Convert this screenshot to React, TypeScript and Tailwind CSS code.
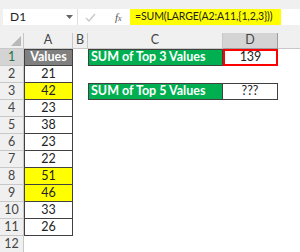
import React from 'react';

const values: { v: string; hi?: boolean }[] = [
  { v: '21' },
  { v: '42', hi: true },
  { v: '23' },
  { v: '38' },
  { v: '23' },
  { v: '22' },
  { v: '51', hi: true },
  { v: '46', hi: true },
  { v: '33' },
  { v: '26' },
];

function RowHead({ n, active }: { n: number; active?: boolean }) {
  return (
    <div
      className={`w-[24px] h-full shrink-0 flex items-center justify-center border-r border-b border-[#c8c8c8] text-[12.5px] ${
        active ? 'bg-[#d4d4d4] text-[#217346]' : 'bg-[#f0f0f0] text-[#444]'
      }`}
    >
      {n}
    </div>
  );
}

export default function App() {
  return (
    <div className="w-[300px] h-[252px] overflow-hidden bg-white text-black" style={{ fontFamily: 'Lato, "Open Sans", sans-serif' }}>
      {/* formula bar */}
      <div className="h-[33px] bg-[#f0f0f0] pt-[9px]">
        <div className="flex h-[16px] ml-[3px] bg-white">
          <div className="w-[75px] flex items-center justify-between pl-[7px] pr-[4px] border-r border-[#e0e0e0]">
            <span className="text-[12px] text-[#222]">D1</span>
            <svg width="7" height="4" viewBox="0 0 7 4">
              <path d="M0 0h7L3.5 4z" fill="#666" />
            </svg>
          </div>
          <div className="w-[52px] flex items-center pl-[7px] gap-[19px]">
            <svg width="11" height="9" viewBox="0 0 11 9">
              <path d="M1 5l3 3 6-7" stroke="#c8c8c8" strokeWidth="1.4" fill="none" />
            </svg>
            <span className="text-[11px] italic text-[#555]" style={{ fontFamily: '"Liberation Serif", serif' }}>
              f<span className="text-[8px]">x</span>
            </span>
          </div>
          <div className="w-[151px] bg-[#ffff00] flex items-center pl-[5px] text-[10.5px] text-[#222] whitespace-nowrap tracking-[-0.1px]">
            =SUM(LARGE(A2:A11,{'{'}1,2,3{'}'}))
          </div>
          <div className="flex-1 bg-white" />
        </div>
      </div>

      {/* column headers */}
      <div className="flex h-[16px] text-[12.5px] text-[#444]">
        <div className="w-[24px] shrink-0 bg-[#f0f0f0] border-r border-b border-[#c8c8c8] relative">
          <svg className="absolute right-[2px] bottom-[2px]" width="10" height="10" viewBox="0 0 10 10">
            <path d="M10 0V10H0z" fill="#b8b8b8" />
          </svg>
        </div>
        <div className="w-[49px] shrink-0 bg-[#f0f0f0] border-r border-b border-[#c8c8c8] flex items-center justify-center">A</div>
        <div className="w-[15px] shrink-0 bg-[#f0f0f0] border-r border-b border-[#c8c8c8] flex items-center justify-center">B</div>
        <div className="w-[135px] shrink-0 bg-[#f0f0f0] border-r border-b border-[#c8c8c8] flex items-center justify-center">C</div>
        <div className="w-[55px] shrink-0 bg-[#d4d4d4] border-r border-b border-[#9e9e9e] flex items-center justify-center">D</div>
        <div className="flex-1 bg-[#f0f0f0] border-b border-[#c8c8c8]" />
      </div>

      {/* row 1 */}
      <div className="flex h-[17px] text-[12.5px]">
        <RowHead n={1} active />
        <div className="w-[49px] shrink-0 bg-[#808080] border border-[#404040] text-white font-bold flex items-center justify-center">
          Values
        </div>
        <div className="w-[15px] shrink-0" />
        <div className="w-[135px] shrink-0 bg-[#00b050] border border-[#404040] text-white font-bold flex items-center pl-[2px]">
          SUM of Top 3 Values
        </div>
        <div className="w-[55px] shrink-0 border-2 border-[#ff0000] flex items-center justify-center text-[#222]">
          139
        </div>
      </div>

      {values.map((row, i) => (
        <div key={i} className="flex h-[17px] text-[12.5px]">
          <RowHead n={i + 2} />
          <div
            className={`w-[49px] shrink-0 border-x border-b border-[#404040] flex items-center justify-center text-[#222] ${
              row.hi ? 'bg-[#ffff00]' : 'bg-white'
            }`}
          >
            {row.v}
          </div>
          {i === 1 && (
            <>
              <div className="w-[15px] shrink-0" />
              <div className="w-[135px] shrink-0 bg-[#00b050] border border-[#404040] text-white font-bold flex items-center pl-[2px]">
                SUM of Top 5 Values
              </div>
              <div className="w-[55px] shrink-0 border border-l-0 border-[#404040] flex items-center justify-center text-[#222]">
                ???
              </div>
            </>
          )}
        </div>
      ))}

      <div className="flex h-[17px] text-[12.5px]">
        <RowHead n={12} />
      </div>
    </div>
  );
}
